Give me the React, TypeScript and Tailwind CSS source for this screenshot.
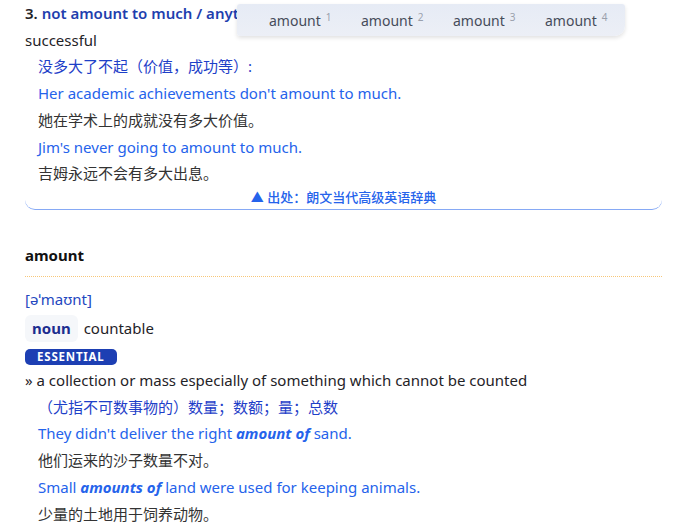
import React from "react";

const font = { fontFamily: '"Noto Sans", "Noto Sans CJK SC", sans-serif' };

export default function App() {
  return (
    <div className="relative w-[690px] h-[524px] overflow-hidden bg-white text-[15px] leading-[26.7px] text-[#1f2328]" style={font}>
      <div className="px-[25px] pr-[28px]">
        <div className="rounded-b-[10px] border-b-[1.5px] border-[#86a9f5] pb-[1px]">
          <div className="font-semibold text-[#1f3fae]">
            <span className="text-[#1f2328]">3.</span> not amount to much / anything
          </div>
          <div>successful</div>
          <div className="pl-[13px] text-[#1e40c8]">没多大了不起（价值，成功等）:</div>
          <div className="pl-[13px] text-[#2563eb]">Her academic achievements don't amount to much.</div>
          <div className="pl-[13px] text-[#333]">她在学术上的成就没有多大价值。</div>
          <div className="pl-[13px] text-[#2563eb]">Jim's never going to amount to much.</div>
          <div className="pl-[13px] text-[#333]">吉姆永远不会有多大出息。</div>
          <div className="-mt-[1px] text-center text-[13px] leading-[22px] font-medium text-[#2563eb]">▲ 出处：朗文当代高级英语辞典</div>
        </div>

        <div className="mt-[32px] font-bold text-[#111]">amount</div>
        <div className="mt-[7px] border-b border-dotted border-[#f7c77a]"></div>
        <div className="mt-[9px] text-[#2448c0]">[əˈmaʊnt]</div>
        <div className="mt-[3px] flex items-center gap-[6px]">
          <span className="rounded-md bg-[#f5f7fa] px-[7px] font-bold text-[#1c2d8f]">noun</span>
          <span>countable</span>
        </div>
        <div className="mt-[7px] flex">
          <span className="rounded-[5px] bg-[#1d3fb3] px-[12px] text-[11.5px] leading-[16px] font-bold tracking-[0.8px] text-white">ESSENTIAL</span>
        </div>
        <div className="mt-[2px]">» a collection or mass especially of something which cannot be counted</div>
        <div className="pl-[13px] text-[#1e40c8]">（尤指不可数事物的）数量；数额；量；总数</div>
        <div className="pl-[13px] text-[#2563eb]">They didn't deliver the right <b className="italic">amount of</b> sand.</div>
        <div className="pl-[13px] text-[#333]">他们运来的沙子数量不对。</div>
        <div className="pl-[13px] text-[#2563eb]">Small <b className="italic">amounts of</b> land were used for keeping animals.</div>
        <div className="pl-[13px] text-[#333]">少量的土地用于饲养动物。</div>
      </div>

      <div className="absolute left-[237px] top-[4px] flex h-[32px] w-[388px] items-center rounded-[3px] rounded-br-[10px] bg-gradient-to-b from-[#e6ebf5] to-[#eceff6] pl-[32px] pt-[3px] shadow-[0_2px_4px_rgba(0,0,0,0.12)] text-[14px] text-[#464c5a]">
        {[1, 2, 3, 4].map((n) => (
          <span key={n} className="w-[92px] shrink-0">
            amount<sup className="ml-[5px] text-[10px] text-[#9aa0ac]">{n}</sup>
          </span>
        ))}
      </div>
    </div>
  );
}
